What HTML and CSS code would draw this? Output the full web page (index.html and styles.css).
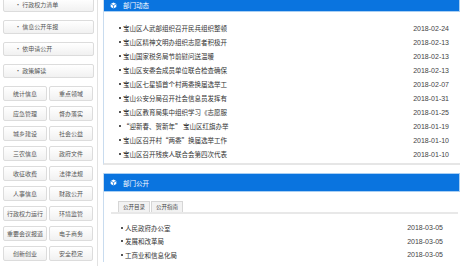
FILE: index.html
```html
<!DOCTYPE html>
<html lang="zh-CN">
<head>
  <meta charset="UTF-8" />
  <title>部门动态</title>
  <link rel="stylesheet" href="styles.css">
</head>
<body>
  <div class="pagina">
    <aside class="lateral">
      <a class="boton-grande">• 行政权力清单</a>
      <a class="boton-grande">• 信息公开年报</a>
      <a class="boton-grande">• 依申请公开</a>
      <a class="boton-grande">• 政策解读</a>

      <div class="rejilla">
        <a>统计信息</a><a>重点领域</a>
        <a>应急管理</a><a>督办落实</a>
        <a>城乡建设</a><a>社会公益</a>
        <a>三农信息</a><a>政府文件</a>
        <a>收征收费</a><a>法律法规</a>
        <a>人事信息</a><a>财政公开</a>
        <a>行政权力运行</a><a>环境监管</a>
        <a>重要会议报道</a><a>电子商务</a>
        <a>创新创业</a><a>安全稳定</a>
      </div>
    </aside>

    <main class="principal">
      <section class="panel panel-dinamica">
        <div class="cabecera">
          <svg class="icono" viewBox="0 0 10 10"><path d="M5 0.6 L9 2.8 L9 7.2 L5 9.4 L1 7.2 L1 2.8 Z" fill="#fff"/><path d="M1.3 3 L5 5 L8.7 3 M5 5 L5 9.2" stroke="#0a74df" stroke-width="1" fill="none"/></svg>
          部门动态
        </div>
        <ul class="lista">
          <li><span class="titulo">宝山区人武部组织召开民兵组织整顿</span><span class="fecha">2018-02-24</span></li>
          <li><span class="titulo">宝山区精神文明办组织志愿者积极开</span><span class="fecha">2018-02-13</span></li>
          <li><span class="titulo">宝山国家税务局节前慰问送温暖</span><span class="fecha">2018-02-13</span></li>
          <li><span class="titulo">宝山区安委会成员单位联合检查确保</span><span class="fecha">2018-02-13</span></li>
          <li><span class="titulo">宝山区七星镇首个村两委换届选举工</span><span class="fecha">2018-02-07</span></li>
          <li><span class="titulo">宝山公安分局召开社会信息员发挥有</span><span class="fecha">2018-01-31</span></li>
          <li><span class="titulo">宝山区教育局集中组织学习《志愿服</span><span class="fecha">2018-01-25</span></li>
          <li><span class="titulo">“迎新春、贺新年” 宝山区红旗办举</span><span class="fecha">2018-01-19</span></li>
          <li><span class="titulo">宝山区召开村“两委”换届选举工作</span><span class="fecha">2018-01-10</span></li>
          <li><span class="titulo">宝山区召开残疾人联合会第四次代表</span><span class="fecha">2018-01-10</span></li>
        </ul>
      </section>

      <section class="panel panel-publica">
        <div class="cabecera">
          <svg class="icono" viewBox="0 0 10 10"><path d="M5 0.6 L9 2.8 L9 7.2 L5 9.4 L1 7.2 L1 2.8 Z" fill="#fff"/><path d="M1.3 3 L5 5 L8.7 3 M5 5 L5 9.2" stroke="#0a74df" stroke-width="1" fill="none"/></svg>
          部门公开
        </div>
        <div class="pestanas">
          <span class="pestana">公开目录</span>
          <span class="pestana">公开指南</span>
        </div>
        <ul class="lista">
          <li><span class="titulo">人民政府办公室</span><span class="fecha">2018-03-05</span></li>
          <li><span class="titulo">发展和改革局</span><span class="fecha">2018-03-05</span></li>
          <li><span class="titulo">工商业和信息化局</span><span class="fecha">2018-03-05</span></li>
        </ul>
      </section>
    </main>
  </div>
</body>
</html>
```

FILE: styles.css
```css
body {
  margin: 0;
  background: #fff;
  font-family: "Noto Sans CJK SC", "Liberation Sans", sans-serif;
  color: #333;
  overflow: hidden;
}

.pagina {
  display: flex;
  align-items: flex-start;
  margin-top: -7px;
}

.lateral {
  width: 93px;
  padding: 5px 3px 0 3px;
  border-right: 1px solid #e2e2e2;
  min-height: 290px;
}

.boton-grande,
.rejilla a {
  display: block;
  box-sizing: border-box;
  border: 1px solid #dcdcdc;
  border-radius: 2px;
  background: linear-gradient(#ffffff, #f1f1f1);
  color: #555;
  font-size: 6px;
  text-decoration: none;
  white-space: nowrap;
}

.boton-grande {
  height: 14px;
  line-height: 12px;
  padding-left: 11px;
  margin-bottom: 8px;
}

.rejilla {
  display: grid;
  grid-template-columns: 44px 44px;
  grid-auto-rows: 15px;
  column-gap: 2px;
  row-gap: 5px;
  margin-top: 2px;
}

.rejilla a {
  line-height: 13px;
  text-align: center;
}

.principal {
  width: 357px;
  flex: none;
  margin-left: 5px;
}

.panel {
  border-left: 1px solid #c9dcef;
  border-bottom: 2px solid #e6e6e6;
}

.panel-publica {
  margin-top: 8px;
  border-bottom: none;
}

.cabecera {
  height: 17px;
  background: #0a74df;
  border: 1px solid #a9cff3;
  border-left: none;
  color: #fff;
  font-size: 6.5px;
  display: flex;
  align-items: center;
  padding-left: 6px;
}

/* la primera cabecera queda medio tapada por el scroll */
.panel-dinamica .cabecera {
  box-sizing: border-box;
  height: 19px;
  padding-top: 5px;
}

.icono {
  width: 7px;
  height: 7px;
  margin-right: 6px;
}

.lista {
  list-style: none;
  margin: 0;
  padding: 9px 11px 2px 15px;
}

.lista li {
  display: flex;
  align-items: center;
  height: 14px;
}

.lista li::before {
  content: "";
  width: 2px;
  height: 2px;
  background: #555;
  margin-right: 2px;
  flex: none;
}

.titulo {
  white-space: nowrap;
  font-size: 6.5px;
  color: #333;
}

.fecha {
  margin-left: auto;
  font-family: "Liberation Sans", sans-serif;
  font-size: 7px;
  color: #444;
}

.pestanas {
  display: flex;
  margin: 9px 2px 0 7px;
  padding-left: 7px;
  border-bottom: 2px solid #e8e8e8;
}

.pestana {
  height: 10px;
  line-height: 10px;
  padding: 0 4px;
  border: 1px solid #d6d6d6;
  border-bottom: none;
  background: #f2f2f2;
  font-size: 5.5px;
  color: #444;
  margin-right: 1px;
}

.panel-publica .lista {
  padding: 7px 17px 0 17px;
}

.panel-publica .lista li {
  height: 13.5px;
}
```
